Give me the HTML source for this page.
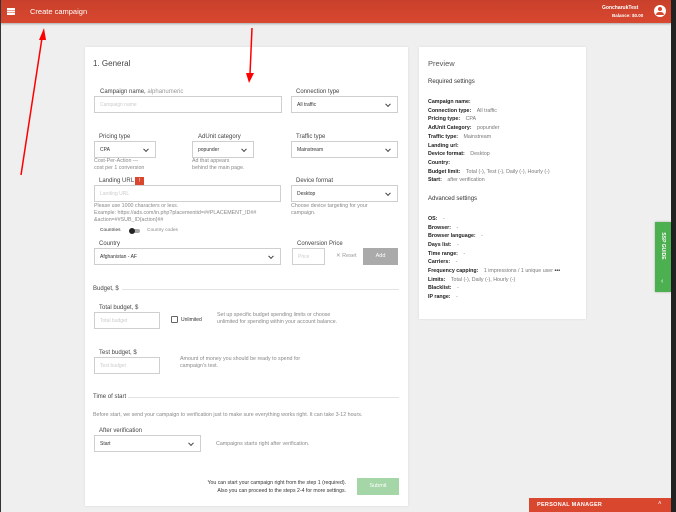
<!DOCTYPE html>
<html><head><meta charset="utf-8"><style>
*{margin:0;padding:0;box-sizing:border-box}
body{width:676px;height:512px;overflow:hidden;background:#efefef;font-family:"Liberation Sans",sans-serif;position:relative;color:#333}
.a{position:absolute;white-space:nowrap}
.hdr{position:absolute;left:0;top:0;width:671px;height:23px;background:linear-gradient(#c8402b,#d9472f);box-shadow:0 1px 2px rgba(0,0,0,.3)}
.rb{position:absolute;left:671px;top:0;width:5px;height:512px;background:#222}
.lb{position:absolute;left:0;top:0;width:1px;height:512px;background:#333}
.card{position:absolute;background:#fff;box-shadow:0 0 2px rgba(0,0,0,.1)}
.lbl{font-size:6px;color:#444}
.in{position:absolute;border:1px solid #cfcfcf;background:#fff;font-size:5px;color:#ccc;padding-left:5px;display:flex;align-items:center}
.sel{color:#333}
.sel:after{content:"";position:absolute;right:7px;top:50%;width:3px;height:3px;border-right:1px solid #444;border-bottom:1px solid #444;transform:translateY(-70%) rotate(45deg)}
.hint{font-size:5.3px;color:#888;line-height:7px}
.pv{font-size:5.3px;color:#222;font-weight:bold}
.pv span{font-weight:normal;color:#777;margin-left:4px}
.ln{position:absolute;height:1px;background:#e2e2e2}
</style></head><body>
<div class="hdr"></div>
<div class="a" style="left:7px;top:8px;width:8px;height:1.5px;background:#fff;box-shadow:0 2.5px 0 #fff,0 5px 0 #fff"></div>
<div class="a" style="left:30px;top:7px;font-size:7.5px;color:#fff">Create campaign</div>
<div class="a" style="left:602px;top:5px;font-size:5px;color:#fff;font-weight:bold">GoncharukTest</div>
<div class="a" style="left:612px;top:13px;font-size:4.5px;color:#fff;font-weight:bold">Balance: $0.00</div>
<div class="a" style="left:654px;top:5px;width:12px;height:12px;border-radius:50%;background:#fff"></div>
<div class="a" style="left:658px;top:7px;width:4px;height:4px;border-radius:50%;background:#d9472f"></div>
<div class="a" style="left:656px;top:12px;width:8px;height:3px;border-radius:4px 4px 0 0;background:#d9472f"></div>
<div class="rb"></div><div class="lb"></div>

<div class="card" style="left:85px;top:47px;width:323px;height:459px"></div>
<div class="a" style="left:93px;top:59px;font-size:8px;color:#444">1. General</div>

<div class="a lbl" style="left:100px;top:89px">Campaign name, <span style="color:#999">alphanumeric</span></div>
<div class="in" style="left:94px;top:96px;width:188px;height:17px">Campaign name</div>
<div class="a lbl" style="left:296px;top:89px">Connection type</div>
<div class="in sel" style="left:291px;top:96px;width:107px;height:17px">All traffic</div>

<div class="a lbl" style="left:99px;top:134px">Pricing type</div>
<div class="in sel" style="left:94px;top:141px;width:62px;height:17px">CPA</div>
<div class="a lbl" style="left:198px;top:134px">AdUnit category</div>
<div class="in sel" style="left:192px;top:141px;width:62px;height:17px">popunder</div>
<div class="a lbl" style="left:296px;top:134px">Traffic type</div>
<div class="in sel" style="left:291px;top:141px;width:107px;height:17px">Mainstream</div>
<div class="a hint" style="left:94px;top:158px">Cost-Per-Action —<br>cost per 1 conversion</div>
<div class="a hint" style="left:192px;top:158px">Ad that appears<br>behind the main page.</div>

<div class="a lbl" style="left:99px;top:178px">Landing URL</div>
<div class="a" style="left:135px;top:177px;width:9px;height:8px;background:#d9472f;color:#fff;font-size:5px;text-align:center;line-height:8px">!</div>
<div class="in" style="left:94px;top:185px;width:187px;height:17px">Landing URL</div>
<div class="a lbl" style="left:296px;top:178px">Device format</div>
<div class="in sel" style="left:291px;top:185px;width:107px;height:17px">Desktop</div>
<div class="a hint" style="left:94px;top:203px">Please use 1000 characters or less.<br>Example: https://ads.com/in.php?placementid=##PLACEMENT_ID##<br>&amp;action=##SUB_ID{action}##</div>
<div class="a hint" style="left:291px;top:203px">Choose device targeting for your<br>campaign.</div>

<div class="a" style="left:100px;top:228px;font-size:4.8px;color:#333">Countries</div>
<div class="a" style="left:130px;top:229px;width:10px;height:4px;border-radius:2px;background:#aaa"></div>
<div class="a" style="left:129px;top:228px;width:6px;height:6px;border-radius:50%;background:#222"></div>
<div class="a" style="left:147px;top:228px;font-size:4.8px;color:#888">Country codes</div>

<div class="a lbl" style="left:99px;top:241px">Country</div>
<div class="in sel" style="left:94px;top:248px;width:187px;height:17px">Afghanistan - AF</div>
<div class="a lbl" style="left:297px;top:241px">Conversion Price</div>
<div class="in" style="left:292px;top:248px;width:33px;height:17px">Price</div>
<div class="a" style="left:336px;top:253px;font-size:5.5px;color:#999">✕ Reset</div>
<div class="a" style="left:363px;top:248px;width:35px;height:17px;background:#aaa;color:#fff;font-size:5.5px;text-align:center;line-height:17px">Add</div>

<div class="a" style="left:93px;top:286px;font-size:6px;color:#444">Budget, $</div>
<div class="ln" style="left:122px;top:289px;width:277px"></div>
<div class="a lbl" style="left:99px;top:305px">Total budget, $</div>
<div class="in" style="left:94px;top:312px;width:66px;height:17px">Total budget</div>
<div class="a" style="left:171px;top:316px;width:7px;height:7px;border:1px solid #666;border-radius:1px"></div>
<div class="a" style="left:181px;top:317px;font-size:5px;color:#333">Unlimited</div>
<div class="a hint" style="left:217px;top:312px">Set up specific budget spending limits or choose<br>unlimited for spending within your account balance.</div>

<div class="a lbl" style="left:99px;top:350px">Test budget, $</div>
<div class="in" style="left:94px;top:357px;width:66px;height:17px">Test budget</div>
<div class="a hint" style="left:180px;top:356px">Amount of money you should be ready to spend for<br>campaign's test.</div>

<div class="a" style="left:93px;top:394px;font-size:6px;color:#444">Time of start</div>
<div class="ln" style="left:128px;top:397px;width:271px"></div>
<div class="a hint" style="left:93px;top:412px">Before start, we send your campaign to verification just to make sure everything works right. It can take 3-12 hours.</div>
<div class="a lbl" style="left:99px;top:428px">After verification</div>
<div class="in sel" style="left:94px;top:435px;width:107px;height:17px">Start</div>
<div class="a hint" style="left:216px;top:441px">Campaigns starts right after verification.</div>

<div class="a" style="left:150px;top:479px;width:196px;text-align:right;font-size:5.2px;color:#333;line-height:8px">You can start your campaign right from the step 1 (required).<br>Also you can proceed to the steps 2-4 for more settings.</div>
<div class="a" style="left:357px;top:478px;width:42px;height:17px;background:#a5d6a7;color:#fff;font-size:5.5px;text-align:center;line-height:17px">Submit</div>

<div class="card" style="left:419px;top:47px;width:167px;height:272px"></div>
<div class="a" style="left:428px;top:59px;font-size:7.5px;color:#555">Preview</div>
<div class="a" style="left:428px;top:79px;font-size:6px;color:#333">Required settings</div>
<div class="a pv" style="left:428px;top:99px">Campaign name:</div>
<div class="a pv" style="left:428px;top:108px">Connection type: <span>All traffic</span></div>
<div class="a pv" style="left:428px;top:116px">Pricing type: <span>CPA</span></div>
<div class="a pv" style="left:428px;top:125px">AdUnit Category: <span>popunder</span></div>
<div class="a pv" style="left:428px;top:134px">Traffic type: <span>Mainstream</span></div>
<div class="a pv" style="left:428px;top:143px">Landing url:</div>
<div class="a pv" style="left:428px;top:151px">Device format: <span>Desktop</span></div>
<div class="a pv" style="left:428px;top:160px">Country:</div>
<div class="a pv" style="left:428px;top:169px">Budget limit: <span>Total (-), Test (-), Daily (-), Hourly (-)</span></div>
<div class="a pv" style="left:428px;top:177px">Start: <span>after verification</span></div>
<div class="a" style="left:428px;top:196px;font-size:6px;color:#333">Advanced settings</div>
<div class="a pv" style="left:428px;top:216px">OS: <span>-</span></div>
<div class="a pv" style="left:428px;top:225px">Browser: <span>-</span></div>
<div class="a pv" style="left:428px;top:233px">Browser language: <span>-</span></div>
<div class="a pv" style="left:428px;top:242px">Days list: <span>-</span></div>
<div class="a pv" style="left:428px;top:251px">Time range: <span>-</span></div>
<div class="a pv" style="left:428px;top:259px">Carriers: <span>-</span></div>
<div class="a pv" style="left:428px;top:268px">Frequency capping: <span>1 impressions / 1 unique user <b style="color:#333">•••</b></span></div>
<div class="a pv" style="left:428px;top:277px">Limits: <span>Total (-), Daily (-), Hourly (-)</span></div>
<div class="a pv" style="left:428px;top:285px">Blacklist: <span>-</span></div>
<div class="a pv" style="left:428px;top:294px">IP range: <span>-</span></div>

<div class="a" style="left:655px;top:222px;width:16px;height:70px;background:#4caf50;box-shadow:0 0 2px rgba(0,0,0,.3)"></div>
<div class="a" style="left:643px;top:243px;font-size:5px;color:#fff;font-weight:bold;transform:rotate(90deg);width:40px;text-align:center">SSP GUIDE</div>
<div class="a" style="left:661px;top:278px;font-size:7px;color:#fff">‹</div>

<div class="a" style="left:529px;top:498px;width:142px;height:14px;background:#d9472f"></div>
<div class="a" style="left:537px;top:502px;font-size:5.5px;color:#fff;font-weight:bold;letter-spacing:.3px">PERSONAL MANAGER</div>
<div class="a" style="left:658px;top:501px;font-size:6px;color:#fff">˄</div>

<svg class="a" style="left:0;top:0" width="676" height="512">
<line x1="21" y1="175" x2="42" y2="38" stroke="#f00" stroke-width="1.5"/>
<polygon points="44,28 39,40 46,40" fill="#f00"/>
<line x1="252" y1="28" x2="250" y2="74" stroke="#f00" stroke-width="1.5"/>
<polygon points="249,83 246,73 254,73" fill="#f00"/>
</svg>
</body></html>
